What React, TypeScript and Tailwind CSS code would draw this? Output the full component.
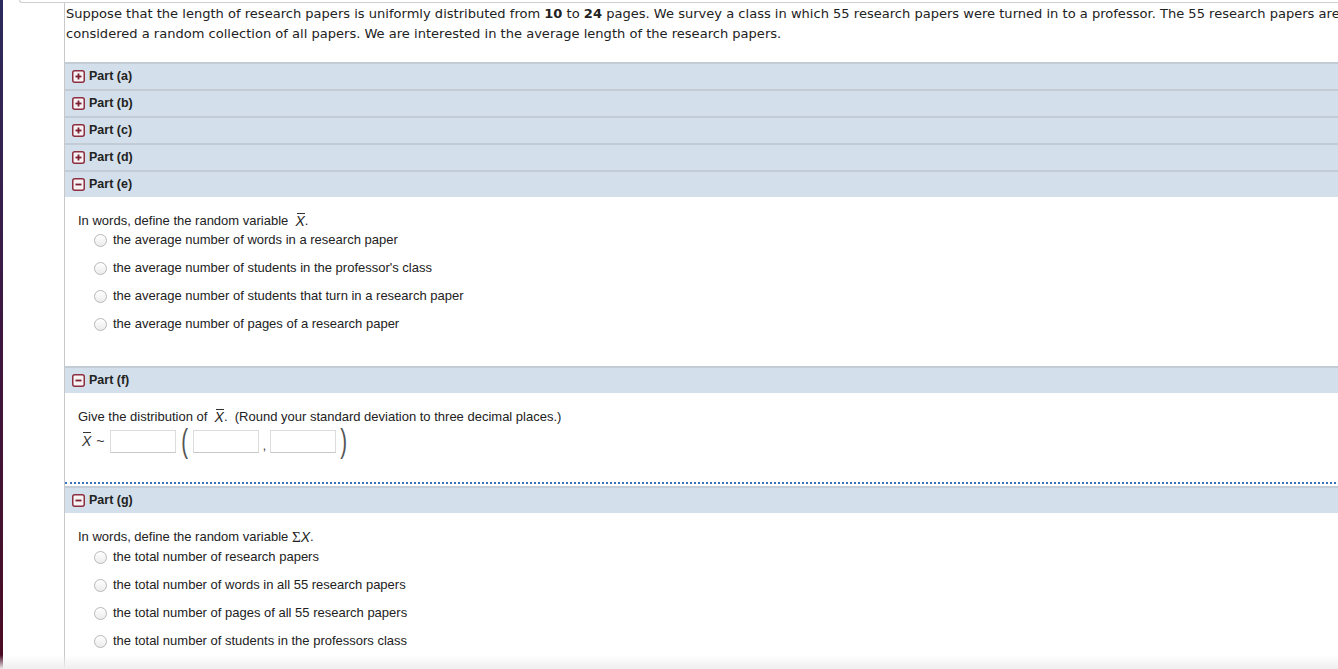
import React from "react";

type PartProps = { label: string; open?: boolean };

function ToggleIcon({ open }: { open?: boolean }) {
  return (
    <svg width="13" height="13" viewBox="0 0 13 13" className="shrink-0">
      <rect x="0.75" y="0.75" width="11.5" height="11.5" rx="2" fill="#f7f3f4" stroke="#8e2f40" strokeWidth="1.5" />
      <rect x="3.5" y="5.6" width="6" height="1.8" fill="#7a1f30" />
      {!open && <rect x="5.6" y="3.5" width="1.8" height="6" fill="#7a1f30" />}
    </svg>
  );
}

function PartHeader({ label, open }: PartProps) {
  return (
    <div className="h-[27px] flex items-center gap-[4px] pl-[7px] bg-[#d3dfea] border-t-2 border-[#c3ccd5]">
      <ToggleIcon open={open} />
      <span className="font-bold text-[12.5px] text-[#222]">{label}</span>
    </div>
  );
}

function Radio() {
  return (
    <span className="w-[13px] h-[13px] rounded-full border border-[#b8b8b8] bg-gradient-to-b from-white to-[#ececec] shrink-0" />
  );
}

function Options({ items }: { items: string[] }) {
  return (
    <div className="flex flex-col gap-[10px] pl-[16px]">
      {items.map((t, i) => (
        <label key={i} className="flex items-center gap-[6px] h-[18px] text-[13px] text-[#222]">
          <Radio />
          <span>{t}</span>
        </label>
      ))}
    </div>
  );
}

function XBar() {
  return (
    <span className="relative inline-block italic font-['Liberation_Sans',sans-serif] text-[14px]">
      X
      <span className="absolute left-[1px] right-[0px] top-[1px] h-px bg-[#333]" />
    </span>
  );
}

function Blank() {
  return <span className="inline-block w-[66px] h-[23px] border border-[#dcdcdc] border-b-[#c8c8c8] bg-white" />;
}

export default function App() {
  return (
    <div className="w-[1338px] h-[669px] overflow-hidden relative flex bg-white font-['Liberation_Sans',Arial,sans-serif]">
      <div className="w-[3px] shrink-0 bg-gradient-to-b from-[#2b2a5c] via-[#3d1640] to-[#4a0a22]" />
      <div className="flex-1 flex flex-col">
        <div className="h-[3px] ml-[16px] border-l border-b border-[#cfcfcf] rounded-bl-[3px] bg-white" />
        <div className="flex flex-1">
          <div className="w-[61px] shrink-0" />
          <div className="w-[1300px] shrink-0 border-l border-[#c8c8c8]">
            <p className="pl-px pt-[1px] text-[13.05px] leading-[20px] text-[#222] font-['DejaVu_Sans',Verdana,sans-serif] whitespace-nowrap">
              Suppose that the length of research papers is uniformly distributed from <b>10</b> to <b>24</b> pages. We survey a class in which 55 research papers were turned in to a professor. The 55 research papers are
              <br />
              considered a random collection of all papers. We are interested in the average length of the research papers.
            </p>

            <div className="mt-[18px]">
              <PartHeader label="Part (a)" />
              <PartHeader label="Part (b)" />
              <PartHeader label="Part (c)" />
              <PartHeader label="Part (d)" />
              <PartHeader label="Part (e)" open />
            </div>

            <div className="pl-[13px] pt-[15px] h-[169px]">
              <div className="text-[13px] text-[#222] leading-[18px] mb-[1px] flex items-center">
                <span>In words, define the random variable&nbsp;&nbsp;</span>
                <XBar />
                <span>.</span>
              </div>
              <Options
                items={[
                  "the average number of words in a research paper",
                  "the average number of students in the professor's class",
                  "the average number of students that turn in a research paper",
                  "the average number of pages of a research paper",
                ]}
              />
            </div>

            <PartHeader label="Part (f)" open />
            <div className="pl-[13px] pt-[15px] h-[89px]">
              <div className="text-[13px] text-[#222] leading-[18px] flex items-center">
                <span>Give the distribution of&nbsp;&nbsp;</span>
                <XBar />
                <span>.&nbsp;&nbsp;(Round your standard deviation to three decimal places.)</span>
              </div>
              <div className="flex items-center text-[14px] text-[#333] h-[30px]">
                <span className="ml-[4px] mr-[5px]"><XBar /></span>
                <span className="mr-[5px]">~</span>
                <Blank />
                <span className="text-[34px] font-light leading-none text-[#555] mx-[3px] -mt-[2px] scale-x-[0.6]">(</span>
                <Blank />
                <span className="mx-[4px] mt-[10px] text-[12px]">,</span>
                <Blank />
                <span className="text-[34px] font-light leading-none text-[#555] mx-[2px] -mt-[2px] scale-x-[0.6]">)</span>
              </div>
            </div>
            <div className="border-t-2 border-dotted border-[#3b72b8] mb-[2px]" />

            <PartHeader label="Part (g)" open />
            <div className="pl-[13px] pt-[15px]">
              <div className="text-[13px] text-[#222] leading-[18px] mb-[2px] flex items-center">
                <span>In words, define the random variable&nbsp;</span>
                <span className="font-['Liberation_Serif',serif] text-[15px]">Σ</span>
                <span className="italic text-[14px]">X</span>
                <span>.</span>
              </div>
              <Options
                items={[
                  "the total number of research papers",
                  "the total number of words in all 55 research papers",
                  "the total number of pages of all 55 research papers",
                  "the total number of students in the professors class",
                ]}
              />
            </div>
          </div>
        </div>
      </div>
      <div className="absolute left-0 right-0 bottom-0 h-[14px] bg-gradient-to-b from-transparent to-[#efefef] pointer-events-none" />
    </div>
  );
}
